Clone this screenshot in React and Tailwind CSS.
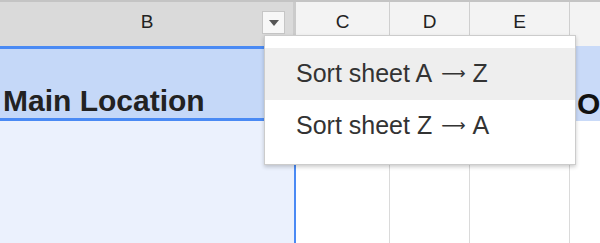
import React from 'react';

const font = { fontFamily: '"Liberation Sans", Arial, sans-serif' };

function ColHeader({ label, className = '' }) {
    return (
        <div className={`flex items-center justify-center border-r border-[#cfcfcf] bg-[#f3f3f3] text-[19px] text-[#222] ${className}`}>
            <span className="-mt-[3px]">{label}</span>
        </div>
    );
}

function MenuItem({ from, to, active }) {
    return (
        <div className={`flex h-[52px] items-center pl-[31px] text-[25px] text-[#333] ${active ? 'bg-[#eeeeee]' : ''}`}>
            <span>Sort sheet {from}</span>
            <span className="ml-[9px] mr-[7px] text-[17px]" style={{ fontFamily: '"DejaVu Sans", sans-serif' }}>⟶</span>
            <span>{to}</span>
        </div>
    );
}

export default function App() {
    return (
        <div className="relative h-[243px] w-[600px] overflow-hidden bg-white" style={font}>
            {/* top edge */}
            <div className="h-[2px] bg-[#c4c4c4]" />

            {/* column headers */}
            <div className="flex h-[44px]">
                <div className="flex w-[296px] shrink-0 items-center border-r-[3px] border-[#cbcbcb] bg-[#dadada] pr-[8px]">
                    <span className="-mt-[3px] flex-1 pl-[32px] text-center text-[19px] text-[#222]">B</span>
                    <button className="-mt-[3px] flex h-[23px] w-[23px] items-center justify-center border border-[#c6c6c6] bg-[#f7f7f7]">
                        <span className="h-0 w-0 border-x-[5px] border-t-[6px] border-x-transparent border-t-[#555]" />
                    </button>
                </div>
                <ColHeader label="C" className="w-[94px] shrink-0" />
                <ColHeader label="D" className="w-[80px] shrink-0" />
                <ColHeader label="E" className="w-[100px] shrink-0" />
                <ColHeader label="" className="flex-1 border-r-0" />
            </div>

            {/* row 1 */}
            <div className="flex h-[75px]">
                <div className="flex w-[296px] shrink-0 items-end border-y-[3px] border-[#4a8af4] bg-[#c5d8f8] pb-[2px] pl-[3px]">
                    <span className="text-[30px] font-bold leading-none text-[#222]">Main Location</span>
                </div>
                <div className="w-[94px] shrink-0 border-r border-[#dadada] bg-[#c9daf8]" />
                <div className="w-[80px] shrink-0 border-r border-[#dadada] bg-[#c9daf8]" />
                <div className="w-[100px] shrink-0 border-r border-[#dadada] bg-[#c9daf8]" />
                <div className="flex min-w-0 flex-1 items-end overflow-hidden bg-[#c9daf8] pb-[2px] pl-[7px]">
                    <span className="text-[30px] font-bold leading-none text-[#111]">O</span>
                </div>
            </div>

            {/* row 2 */}
            <div className="flex h-[122px]">
                <div className="w-[296px] shrink-0 border-r-2 border-[#4a8af4] bg-[#ebf1fd]" />
                <div className="w-[94px] shrink-0 border-r border-[#dadada]" />
                <div className="w-[80px] shrink-0 border-r border-[#dadada]" />
                <div className="w-[100px] shrink-0 border-r border-[#dadada]" />
                <div className="flex-1" />
            </div>

            {/* sort menu */}
            <div className="absolute left-[264px] top-[35px] w-[312px] border border-[#cccccc] bg-white py-[12px] shadow-[0_2px_4px_rgba(0,0,0,0.2)]">
                <MenuItem from="A" to="Z" active />
                <MenuItem from="Z" to="A" />
            </div>
        </div>
    );
}
